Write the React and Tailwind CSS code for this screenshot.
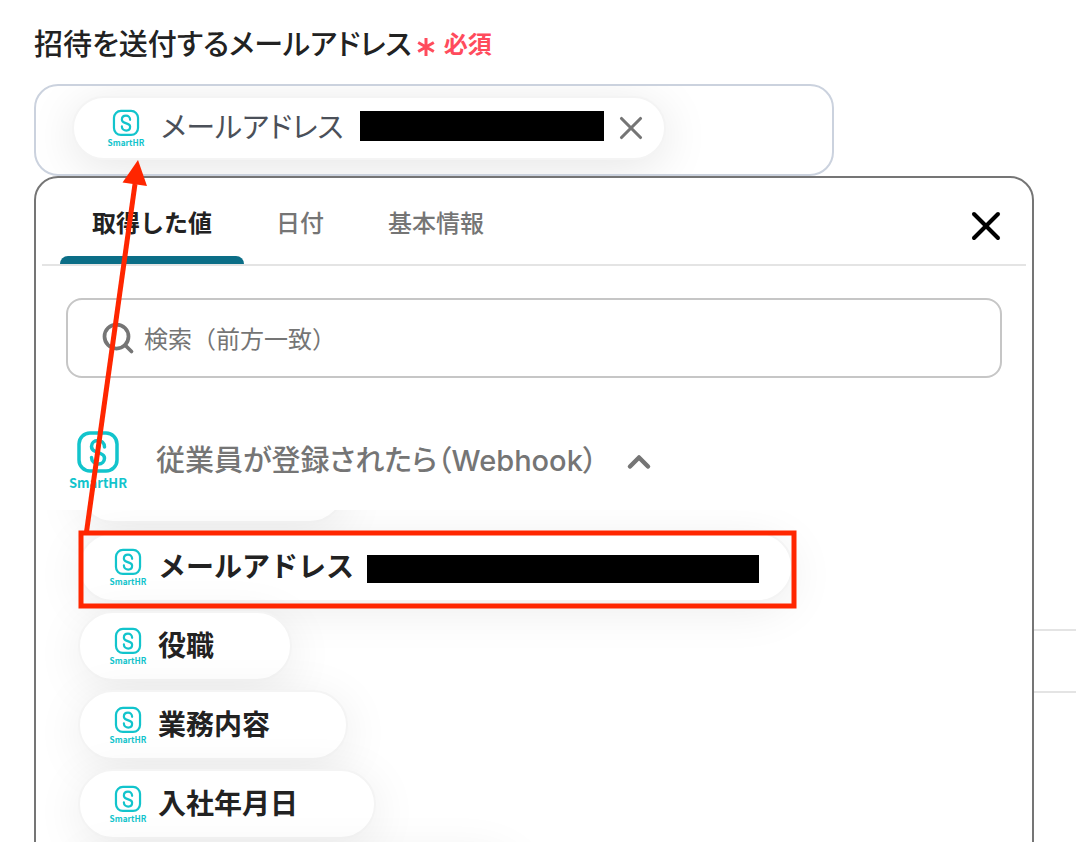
import React, { useState } from 'react';
import { X, ChevronUp, Search } from 'lucide-react';

const tabs = [
  { id: 'values', name: '取得した値' },
  { id: 'date', name: '日付' },
  { id: 'basic', name: '基本情報' },
];

const items = [
  { name: 'メールアドレス', redacted: true },
  { name: '役職' },
  { name: '業務内容' },
  { name: '入社年月日' },
];

const SmartHRLogo = ({ className }) => (
  <svg viewBox="0 0 60 60" className={`shrink-0 overflow-visible ${className}`} role="img" aria-label="SmartHR">
    <g fill="none" stroke="#12c4cc">
      <rect x="11" y="3" width="38" height="38" rx="11" strokeWidth="3.5" />
      <path
        d="M36.5 17C36.5 13 33.5 10.5 30 10.5C26 10.5 23.5 13 23.5 16.5C23.5 19 25 20.5 27.5 21.5L32.5 23.5C35 24.5 36.5 26 36.5 28C36.5 31.5 34 34 30.5 34C27 34 23.5 31.5 23.5 27.5"
        strokeWidth="3.5"
        strokeLinecap="round"
      />
    </g>
    <text x="30" y="58" textAnchor="middle" fill="#12c4cc" fontSize="13" fontWeight="700" fontFamily="'Noto Sans CJK JP', sans-serif">
      SmartHR
    </text>
  </svg>
);

const Chip = ({ item }) => (
  <li>
    <button
      type="button"
      className="flex h-[70px] items-center rounded-full border-2 border-[#f4f4f4] bg-white pl-[29px] pr-8 text-[28px] font-bold shadow-[0_8px_48px_rgba(0,0,0,0.08)]"
    >
      <SmartHRLogo className="mr-[11px] size-[38px]" />
      <span>{item.name}</span>
      {item.redacted ? <span className="ml-[13px] mt-1 h-7 w-[392px] bg-black" /> : <span className="w-11" />}
    </button>
  </li>
);

const ValuePicker = () => {
  const [activeTab, setActiveTab] = useState('values');

  return (
    <div className="absolute inset-x-0 top-full rounded-3xl border-2 border-[#757575] bg-white pb-10">
      <div className="mx-[6px] flex h-[88px] items-stretch border-b-2 border-[#e4e4e4] pl-[18px]">
        <div role="tablist" className="flex">
          {tabs.map(tab => (
            <button
              key={tab.id}
              type="button"
              role="tab"
              aria-selected={activeTab === tab.id}
              onClick={() => setActiveTab(tab.id)}
              className={`${
                activeTab === tab.id ? 'font-bold text-[#222]' : 'font-medium text-[#757575]'
              } relative px-8 pt-[6px] text-2xl`}
            >
              {tab.name}
              {activeTab === tab.id && (
                <span className="absolute inset-x-0 bottom-0 h-2 rounded-t-lg bg-[#0b6e87]" />
              )}
            </button>
          ))}
        </div>
        <button type="button" aria-label="閉じる" className="ml-auto mr-4 mt-[10px] self-center text-black">
          <X size={48} strokeWidth={2} />
        </button>
      </div>

      <label className="mx-[30px] mt-8 flex h-20 items-center gap-2 rounded-2xl border-2 border-[#c6c6c6] pl-8">
        <Search size={36} strokeWidth={2.5} className="text-[#757575]" />
        <input
          type="search"
          aria-label="検索"
          placeholder="検索（前方一致）"
          className="min-w-0 flex-1 pt-1 text-2xl outline-none placeholder:text-[#757575]"
        />
      </label>

      <button
        type="button"
        aria-expanded="true"
        className="ml-8 mt-[52px] flex h-[60px] items-center text-[29px] font-medium text-[#757575]"
      >
        <SmartHRLogo className="mr-7 size-[60px]" />
        <span className="pt-[2px] [font-feature-settings:'palt']">従業員が登録されたら（Webhook）</span>
        <ChevronUp size={36} strokeWidth={3} className="ml-6 mt-1" />
      </button>

      <div className="mt-5 overflow-hidden pb-10 pl-[42px]">
        {/* tail of the row that is scrolled out of the list */}
        <div className="-mt-[57px] h-[70px] w-[267px] rounded-full border-2 border-[#f4f4f4] bg-white shadow-[0_8px_48px_rgba(0,0,0,0.08)]" />
        <ul className="mt-[9px] flex flex-col gap-[9px]">
          {items.map(item => (
            <Chip key={item.name} item={item} />
          ))}
          <li className="h-[70px] w-[440px] rounded-full border-2 border-[#f4f4f4] bg-white shadow-[0_8px_48px_rgba(0,0,0,0.08)]" />
        </ul>
      </div>
    </div>
  );
};

const Annotation = () => (
  <svg
    width="1076"
    height="842"
    viewBox="0 0 1076 842"
    className="pointer-events-none absolute left-0 top-0 z-20 max-w-none"
    aria-hidden="true"
  >
    <rect x="81" y="533" width="713" height="73" fill="none" stroke="#ff2600" strokeWidth="5" />
    <path d="M86.500 532L135 184" stroke="#ff2600" strokeWidth="5" />
    <path d="M138 160L122.500 182.500L147 186Z" fill="#ff2600" />
  </svg>
);

export default function App() {
  return (
    <main className="relative h-screen overflow-hidden bg-white pl-[34px] pr-[42px] pt-[25px] font-['Inter','Noto_Sans_CJK_JP',sans-serif] text-[#222]">
      <div className="flex h-10 items-center">
        <h1 className="text-[29px] font-medium [font-feature-settings:'palt']">招待を送付するメールアドレス</h1>
        <svg viewBox="0 0 20 20" className="ml-1 mt-1 size-5" aria-hidden="true">
          <path d="M10 1V19M2.200 5.500L17.800 14.500M17.800 5.500L2.200 14.500" stroke="#ff4b5c" strokeWidth="3" />
        </svg>
        <span className="ml-2 text-2xl font-bold text-[#ff4b5c]">必須</span>
      </div>

      <div className="relative z-10 mt-[19px]">
        <div className="h-[92px] w-4/5 overflow-hidden rounded-3xl border-2 border-[#cbd2de] pl-9 pt-[10px]">
          <div className="flex h-[64px] w-fit items-center rounded-full border-2 border-[#f4f4f4] bg-white pl-[33px] pr-[14px] text-[29px] text-[#4b5059] shadow-[0_8px_48px_rgba(0,0,0,0.1)]">
            <SmartHRLogo className="mr-4 size-[38px]" />
            <span className="[font-feature-settings:'palt']">メールアドレス</span>
            <span className="mb-1 ml-4 h-[30px] w-[244px] bg-black" />
            <button type="button" aria-label="削除" className="ml-2 text-[#757575]">
              <X size={38} strokeWidth={2} />
            </button>
          </div>
        </div>
        <ValuePicker />
      </div>

      {/* page row behind the picker */}
      <div className="-mr-[42px] mt-[453px] h-16 border-y-2 border-[#e4e4e4]" />

      <Annotation />
    </main>
  );
}
